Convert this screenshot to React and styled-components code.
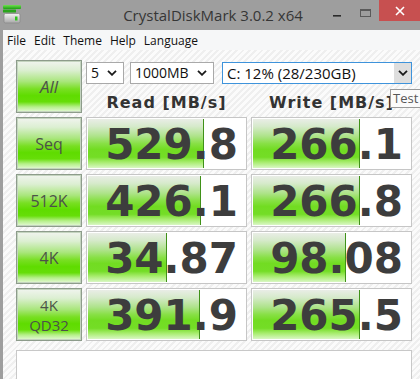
import React from 'react';
import styled, { createGlobalStyle } from 'styled-components';

const GlobalStyle = createGlobalStyle`
  html, body { margin: 0; padding: 0; background: #9e9e9e; }
  body { width: 420px; height: 379px; overflow: hidden; }
  * { box-sizing: border-box; }
`;

const Window = styled.div`
  position: relative;
  width: 420px;
  height: 379px;
  overflow: hidden;
  background: #9e9e9e;
  display: flex;
  flex-direction: column;
  font-family: "Open Sans", "Noto Sans", sans-serif;
`;

const TitleBar = styled.div`
  flex: none;
  height: 30px;
  display: grid;
  grid-template-columns: 1fr auto 1fr;
  align-items: start;
`;

const IconSlot = styled.div`
  padding: 5px 0 0 3px;
  height: 30px;
`;

const TitleText = styled.div`
  padding-left: 6px;
  font-size: 15px;
  line-height: 30px;
  color: #363636;
  white-space: nowrap;
`;

const Controls = styled.div`
  justify-self: end;
  display: flex;
`;

const CtlButton = styled.div`
  width: ${(p) => (p.$close ? 41 : 28)}px;
  height: 21px;
  display: flex;
  align-items: center;
  justify-content: center;
  background: ${(p) => (p.$close ? '#c75050' : 'transparent')};
`;

const Frame = styled.div`
  flex: 1;
  margin-left: 3px;
  display: flex;
  flex-direction: column;
  min-height: 0;
`;

const MenuBar = styled.div`
  flex: none;
  height: 20px;
  padding: 1px 0 0 4px;
  display: flex;
  gap: 8px;
  background: #f6f7f8;
  font-size: 12px;
  line-height: 19px;
  color: #111;
`;

const MenuItem = styled.span``;

const Content = styled.div`
  flex: 1;
  padding: 10px 0 0 13px;
  background-color: #fafafa;
  background-image: repeating-linear-gradient(
    135deg,
    #fbfbfb 0px,
    #fbfbfb 2.5px,
    #efefef 2.5px,
    #efefef 4.5px
  );
`;

const Board = styled.div`
  display: grid;
  grid-template-columns: 66px 161px 161px;
  grid-template-rows: 25px 24px repeat(4, 53px);
  column-gap: 4px;
  row-gap: 4px;
`;

const TestButton = styled.div`
  grid-row: ${(p) => p.$rows || 'auto'};
  display: flex;
  flex-direction: column;
  align-items: center;
  justify-content: center;
  border: 1px solid #8d9c8b;
  box-shadow: inset 0 0 0 1px #c4d4bf;
  background: linear-gradient(
    to bottom,
    #f1f4ef 0%,
    #dcefd2 18%,
    #a9e67c 40%,
    #78df22 55%,
    #5fdc00 68%,
    #66de08 80%,
    #b6f08a 90%,
    #e6f9da 100%
  );
  color: #4c5249;
  font-size: ${(p) => p.$size || 16}px;
  font-style: ${(p) => (p.$italic ? 'italic' : 'normal')};
  line-height: 20px;
`;

const SelectRow = styled.div`
  grid-column: 2 / 4;
  display: flex;
  gap: 6px;
  align-items: flex-start;
  padding-top: 2px;
`;

const SelectBox = styled.div`
  width: ${(p) => p.$w}px;
  height: 22px;
  display: flex;
  align-items: stretch;
  background: #fff;
  border: 1px solid ${(p) => (p.$focused ? '#3e93db' : '#a9a9a9')};
  margin-left: ${(p) => p.$ml || 0}px;
`;

const SelectText = styled.span`
  flex: 1;
  padding-left: 4px;
  font-size: ${(p) => p.$size || 14}px;
  line-height: 20px;
  color: #111;
  white-space: nowrap;
`;

const DropArrow = styled.span`
  width: ${(p) => (p.$boxed ? 17 : 15)}px;
  display: flex;
  align-items: center;
  justify-content: center;
  background: ${(p) => (p.$boxed ? '#dedede' : 'transparent')};
  padding-right: ${(p) => (p.$boxed ? 0 : 4)}px;
  box-sizing: content-box;
`;

const ColumnHeader = styled.div`
  text-align: center;
  font-family: "DejaVu Sans", Verdana, sans-serif;
  font-weight: bold;
  font-size: 16px;
  letter-spacing: 1px;
  line-height: 24px;
  padding-top: 2px;
  color: #333;
  white-space: nowrap;
`;

const ResultCell = styled.div`
  border: 1px solid #c6c6c6;
  padding: 4px 8px 1px 1px;
  background-color: #fff;
  background-image: linear-gradient(
      to right,
      transparent calc(100% - 1px),
      #3f9118 calc(100% - 1px)
    ),
    linear-gradient(
      to bottom,
      #e9ede6 0%,
      #d6eacb 15%,
      #aee38a 35%,
      #88e046 50%,
      #72dc22 62%,
      #74dd26 78%,
      #a6ec6c 88%,
      #d9f7c4 100%
    );
  background-repeat: no-repeat;
  background-position: 1px 1px;
  text-align: right;
  font-family: "DejaVu Sans", Verdana, sans-serif;
  font-weight: bold;
  font-size: 42px;
  line-height: 45px;
  color: #3d3d3d;
  white-space: nowrap;
`;

const CommentBox = styled.div`
  margin-top: 9px;
  width: 396px;
  height: 40px;
  background: #fff;
  border: 1px solid #c8c8c8;
`;

const Tooltip = styled.div`
  position: absolute;
  left: 390px;
  top: 89px;
  height: 19px;
  padding: 0 6px 0 2px;
  background: #fbfbfb;
  border: 1px solid #9a9a9a;
  font-size: 13px;
  line-height: 17px;
  color: #575757;
`;

const Chevron = () => (
  <svg width="10" height="6" viewBox="0 0 10 6">
    <polyline points="1,0.8 5,4.8 9,0.8" fill="none" stroke="#1a1a1a" strokeWidth="1.8" />
  </svg>
);

const AppIcon = () => (
  <svg width="19" height="19" viewBox="0 0 19 19">
    <defs>
      <linearGradient id="gtop" x1="0" y1="0" x2="0" y2="1">
        <stop offset="0" stopColor="#6fe050" />
        <stop offset="1" stopColor="#1e9e14" />
      </linearGradient>
      <linearGradient id="gdrive" x1="0" y1="0" x2="0" y2="1">
        <stop offset="0" stopColor="#f4f4f4" />
        <stop offset="1" stopColor="#a8a8a8" />
      </linearGradient>
    </defs>
    <rect x="0" y="0" width="18" height="4" rx="1" fill="url(#gtop)" />
    <rect x="0" y="4.5" width="13" height="3" rx="0.5" fill="#2aa51c" />
    <rect x="1" y="8.5" width="16" height="9.5" rx="1.5" fill="url(#gdrive)" stroke="#8a8a8a" strokeWidth="0.8" />
    <rect x="12" y="11.5" width="2.5" height="4" fill="#2fc21d" />
  </svg>
);

const rows = [
  { label: ['Seq'], read: '529.8', write: '266.1' },
  { label: ['512K'], read: '426.1', write: '266.8' },
  { label: ['4K'], read: '34.87', write: '98.08' },
  { label: ['4K', 'QD32'], size: 15, read: '391.9', write: '265.5' },
];

const barWidth = (v) => Math.round(30.7 + 31.3 * Math.log10(parseFloat(v)));

const Result = ({ value }) => (
  <ResultCell style={{ backgroundSize: `${barWidth(value)}px calc(100% - 2px)` }}>
    {value}
  </ResultCell>
);

export default function App() {
  return (
    <>
      <GlobalStyle />
      <Window>
        <TitleBar>
          <IconSlot>
            <AppIcon />
          </IconSlot>
          <TitleText>CrystalDiskMark 3.0.2 x64</TitleText>
          <Controls>
            <CtlButton>
              <svg width="9" height="16" viewBox="0 0 9 16">
                <rect x="0" y="12" width="8" height="1.6" fill="#2b2b2b" />
              </svg>
            </CtlButton>
            <CtlButton>
              <svg width="11" height="16" viewBox="0 0 11 16">
                <rect x="0.5" y="6.5" width="10" height="7" fill="none" stroke="#5a5a5a" strokeWidth="1" />
                <rect x="0.5" y="6.5" width="10" height="1.5" fill="#5a5a5a" />
              </svg>
            </CtlButton>
            <CtlButton $close>
              <svg width="10" height="10" viewBox="0 0 10 10">
                <path d="M1 1 L9 9 M9 1 L1 9" stroke="#fff" strokeWidth="1.6" />
              </svg>
            </CtlButton>
          </Controls>
        </TitleBar>
        <Frame>
          <MenuBar>
            <MenuItem>File</MenuItem>
            <MenuItem>Edit</MenuItem>
            <MenuItem>Theme</MenuItem>
            <MenuItem>Help</MenuItem>
            <MenuItem>Language</MenuItem>
          </MenuBar>
          <Content>
            <Board>
              <TestButton $rows="1 / 3" $italic $size={17}>All</TestButton>
              <SelectRow>
                <SelectBox $w={38}>
                  <SelectText>5</SelectText>
                  <DropArrow><Chevron /></DropArrow>
                </SelectBox>
                <SelectBox $w={84}>
                  <SelectText>1000MB</SelectText>
                  <DropArrow><Chevron /></DropArrow>
                </SelectBox>
                <SelectBox $w={190} $ml={2} $focused>
                  <SelectText $size={15}>C: 12% (28/230GB)</SelectText>
                  <DropArrow $boxed><Chevron /></DropArrow>
                </SelectBox>
              </SelectRow>
              <ColumnHeader>Read [MB/s]</ColumnHeader>
              <ColumnHeader>Write [MB/s]</ColumnHeader>
              {rows.map((r) => (
                <React.Fragment key={r.label.join(' ')}>
                  <TestButton $italic={r.italic} $size={r.size}>
                    {r.label.map((l) => (
                      <span key={l}>{l}</span>
                    ))}
                  </TestButton>
                  <Result value={r.read} />
                  <Result value={r.write} />
                </React.Fragment>
              ))}
            </Board>
            <CommentBox />
          </Content>
        </Frame>
        <Tooltip>Test</Tooltip>
      </Window>
    </>
  );
}
